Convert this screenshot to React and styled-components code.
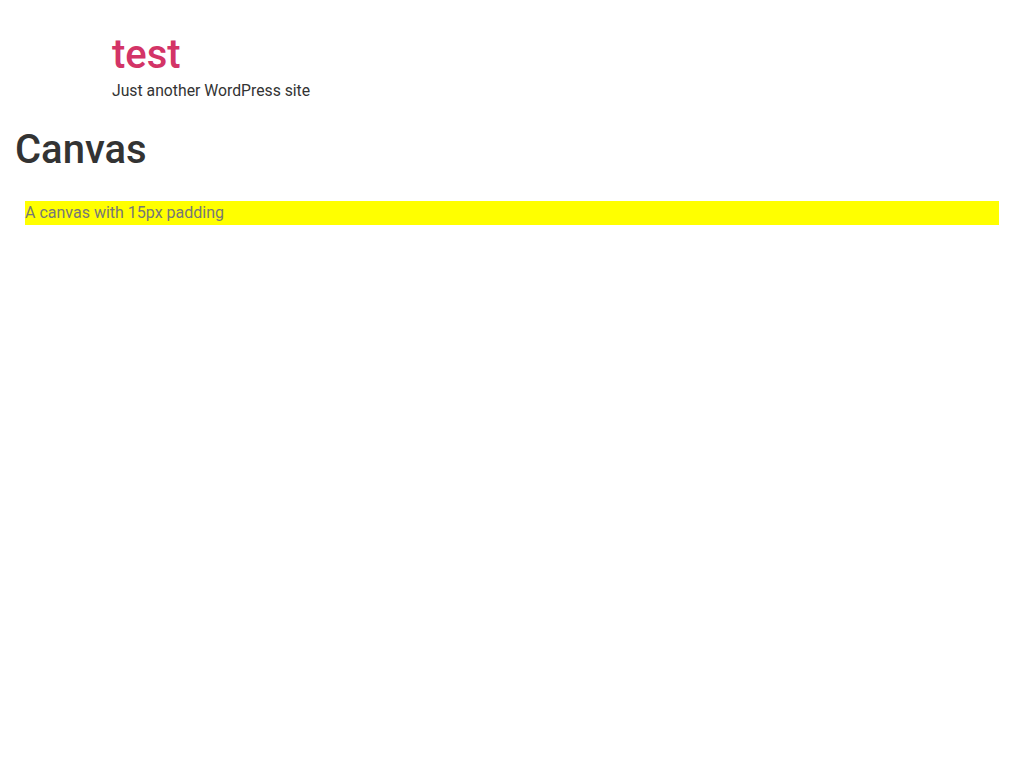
import styled, { createGlobalStyle } from 'styled-components';

const GlobalStyle = createGlobalStyle`
  body {
    margin: 0;
    background: #fff;
    font-family: Roboto, "Liberation Sans", sans-serif;
    color: #333;
  }
`;

const SiteHeader = styled.header`
  padding: 31px 0 0 112px;
`;

const SiteTitle = styled.div`
  font-size: 40px;
  line-height: 48px;
  font-weight: 500;
  color: #d33467;
`;

const Tagline = styled.div`
  margin-top: 0;
  font-size: 15.75px;
  line-height: 24px;
  color: #333;
`;

const Main = styled.main`
  padding: 0 15px;
`;

const Title = styled.h1`
  margin: 23px 0 27px;
  font-size: 40px;
  line-height: 48px;
  font-weight: 500;
  color: #333;
`;

const Canvas = styled.div`
  margin: 0 10px;
  background: #ffff00;
  color: #777;
  font-size: 16px;
  line-height: 24px;
`;

export default function App() {
  return (
    <>
      <GlobalStyle />
      <SiteHeader>
        <SiteTitle>test</SiteTitle>
        <Tagline>Just another WordPress site</Tagline>
      </SiteHeader>
      <Main>
        <Title>Canvas</Title>
        <Canvas>A canvas with 15px padding</Canvas>
      </Main>
    </>
  );
}
